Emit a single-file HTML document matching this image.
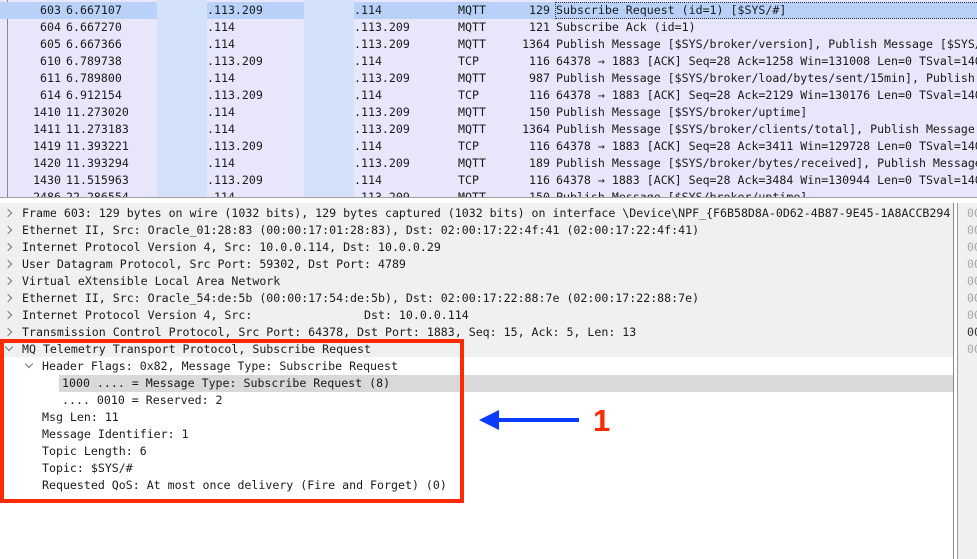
<!DOCTYPE html><html><head><style>
*{margin:0;padding:0;box-sizing:border-box}
body{width:977px;height:559px;overflow:hidden;background:#fff;position:relative;font-family:"DejaVu Sans Mono","Liberation Mono",monospace;font-size:11.6px;color:#1a1a1a}
.a{position:absolute;white-space:pre;line-height:17px}
#pl{position:absolute;left:0;top:0;width:977px;height:198px;background:#e7e6fa;overflow:hidden;border-bottom:1px solid #a0a0a0}
.blk{position:absolute;top:0;height:198px;width:50px;background:#d3e1fb}
#dp{position:absolute;left:0;top:203px;width:954px;height:356px;background:#fff;border-right:1px solid #888}
#hp{position:absolute;left:957px;top:203px;width:20px;height:356px;background:#f0f0f0;border-left:1px solid #999}
.chev{position:absolute;width:6px;height:6px;border-right:1.3px solid #777;border-bottom:1.3px solid #777}
</style></head><body>
<div id="pl">
<div style="position:absolute;left:7px;top:0;width:1px;height:198px;background:#888"></div>
<div style="position:absolute;left:0;top:2px;width:977px;height:17px;background:#b9d1f9"></div>
<div class="blk" style="left:157px"></div>
<div class="blk" style="left:304px"></div>
<div style="position:absolute;left:555px;top:2px;width:422px;height:17px;border:1px dotted #333;border-right:none"></div>
<div id="rows"></div>
</div>
<div id="dp">
<div style="position:absolute;left:0;top:0;width:953px;height:154px;background:#f0f0f0"></div>
<div style="position:absolute;left:59px;top:172px;width:894px;height:17px;background:#d9d9d9"></div>
</div>
<div id="hp"></div>
<div id="dt"></div>
<div style="position:absolute;left:0;top:339px;width:464px;height:164px;border:4px solid #ff2a00"></div>
<div style="position:absolute;left:497px;top:418px;width:82px;height:4px;background:#0a3cff"></div>
<div style="position:absolute;left:479px;top:410px;width:0;height:0;border-top:10px solid transparent;border-bottom:10px solid transparent;border-right:20px solid #0a3cff"></div>
<div class="a" style="left:593px;top:405px;font-family:'Liberation Sans',sans-serif;font-weight:bold;font-size:31px;line-height:31px;color:#ff2a00">1</div>
<script>
var P=[["603","6.667107",".113.209",".114","MQTT","129","Subscribe Request (id=1) [$SYS/#]"],
["604","6.667270",".114",".113.209","MQTT","121","Subscribe Ack (id=1)"],
["605","6.667366",".114",".113.209","MQTT","1364","Publish Message [$SYS/broker/version], Publish Message [$SYS/broker"],
["610","6.789738",".113.209",".114","TCP","116","64378 → 1883 [ACK] Seq=28 Ack=1258 Win=131008 Len=0 TSval=1400"],
["611","6.789800",".114",".113.209","MQTT","987","Publish Message [$SYS/broker/load/bytes/sent/15min], Publish Message"],
["614","6.912154",".113.209",".114","TCP","116","64378 → 1883 [ACK] Seq=28 Ack=2129 Win=130176 Len=0 TSval=1400"],
["1410","11.273020",".114",".113.209","MQTT","150","Publish Message [$SYS/broker/uptime]"],
["1411","11.273183",".114",".113.209","MQTT","1364","Publish Message [$SYS/broker/clients/total], Publish Message"],
["1419","11.393221",".113.209",".114","TCP","116","64378 → 1883 [ACK] Seq=28 Ack=3411 Win=129728 Len=0 TSval=1400"],
["1420","11.393294",".114",".113.209","MQTT","189","Publish Message [$SYS/broker/bytes/received], Publish Message"],
["1430","11.515963",".113.209",".114","TCP","116","64378 → 1883 [ACK] Seq=28 Ack=3484 Win=130944 Len=0 TSval=1400"],
["2486","22.286554",".114",".113.209","MQTT","150","Publish Message [$SYS/broker/uptime]"]];
var h="";
P.forEach(function(p,i){var y=2+i*17;
h+='<div class="a" style="top:'+y+'px;left:0;width:61px;text-align:right">'+p[0]+'</div>';
h+='<div class="a" style="top:'+y+'px;left:66px">'+p[1]+'</div>';
h+='<div class="a" style="top:'+y+'px;left:207px">'+p[2]+'</div>';
h+='<div class="a" style="top:'+y+'px;left:354px">'+p[3]+'</div>';
h+='<div class="a" style="top:'+y+'px;left:458px">'+p[4]+'</div>';
h+='<div class="a" style="top:'+y+'px;left:500px;width:50px;text-align:right">'+p[5]+'</div>';
h+='<div class="a" style="top:'+y+'px;left:556px">'+p[6]+'</div>';});
document.getElementById("rows").innerHTML=h;
var D=[[22,">","Frame 603: 129 bytes on wire (1032 bits), 129 bytes captured (1032 bits) on interface \\Device\\NPF_{F6B58D8A-0D62-4B87-9E45-1A8ACCB294"],
[22,">","Ethernet II, Src: Oracle_01:28:83 (00:00:17:01:28:83), Dst: 02:00:17:22:4f:41 (02:00:17:22:4f:41)"],
[22,">","Internet Protocol Version 4, Src: 10.0.0.114, Dst: 10.0.0.29"],
[22,">","User Datagram Protocol, Src Port: 59302, Dst Port: 4789"],
[22,">","Virtual eXtensible Local Area Network"],
[22,">","Ethernet II, Src: Oracle_54:de:5b (00:00:17:54:de:5b), Dst: 02:00:17:22:88:7e (02:00:17:22:88:7e)"],
[22,">","Internet Protocol Version 4, Src:                Dst: 10.0.0.114"],
[22,">","Transmission Control Protocol, Src Port: 64378, Dst Port: 1883, Seq: 15, Ack: 5, Len: 13"],
[22,"v","MQ Telemetry Transport Protocol, Subscribe Request"],
[42,"v","Header Flags: 0x82, Message Type: Subscribe Request"],
[62,"","1000 .... = Message Type: Subscribe Request (8)"],
[62,"",".... 0010 = Reserved: 2"],
[42,"","Msg Len: 11"],[42,"","Message Identifier: 1"],[42,"","Topic Length: 6"],[42,"","Topic: $SYS/#"],
[42,"","Requested QoS: At most once delivery (Fire and Forget) (0)"]];
h="";
D.forEach(function(d,i){var y=205+i*17;
if(d[1]==">")h+='<div class="chev" style="left:5px;top:'+(y+5)+'px;transform:rotate(-45deg)"></div>';
if(d[1]=="v")h+='<div class="chev" style="left:'+(d[0]-16)+'px;top:'+(y+3)+'px;transform:rotate(45deg)"></div>';
h+='<div class="a" style="top:'+y+'px;left:'+d[0]+'px">'+d[2]+'</div>';});
for(var i=0;i<9;i++)h+='<div class="a" style="top:'+(205+i*17)+'px;left:967px;color:'+(i==7?'#333':'#aaa')+'">00</div>';
document.getElementById("dt").innerHTML=h;
</script>
</body></html>
